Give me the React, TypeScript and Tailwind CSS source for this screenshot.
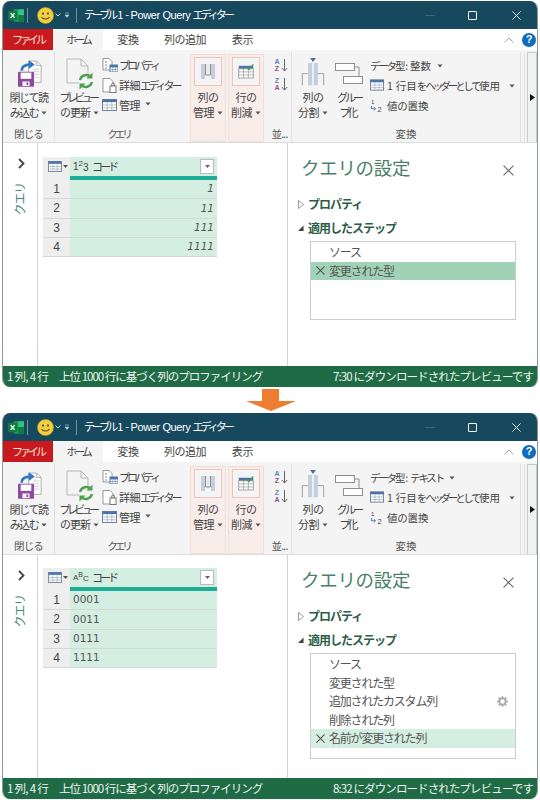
import React from "react";

const JP = { fontFamily: '"Noto Sans CJK JP", "Noto Sans", sans-serif' };
const LAT = { fontFamily: '"Liberation Sans", sans-serif' };

function K({ children }: { children: React.ReactNode }) {
  return <span className="tracking-[-3px]">{children}</span>;
}

function Caret() {
  return <svg width="6" height="4" viewBox="0 0 6 4" className="inline-block ml-[3px] mb-[2px]"><path d="M0.5 0.5h5L3 3.5z" fill="#555" /></svg>;
}

function ExcelLogo() {
  return (
    <svg width="16" height="15" viewBox="0 0 17 15">
      <rect x="6" y="1" width="11" height="13" fill="#21a366" />
      <rect x="11" y="1" width="6" height="6" fill="#33c481" />
      <rect x="11" y="7" width="6" height="7" fill="#107c41" />
      <rect x="0" y="2.5" width="10" height="10" rx="1" fill="#107c41" />
      <path d="M2.8 5l4.2 5M7 5l-4.2 5" stroke="#fff" strokeWidth="1.4" />
    </svg>
  );
}

function Smiley() {
  return (
    <svg width="17" height="17" viewBox="0 0 17 17">
      <circle cx="8.5" cy="8.5" r="8" fill="#f2cf3c" stroke="#c9a520" strokeWidth="0.6" />
      <circle cx="6" cy="6.5" r="1" fill="#333" />
      <circle cx="11" cy="6.5" r="1" fill="#333" />
      <path d="M4.5 10c1 2.6 7 2.6 8 0" fill="none" stroke="#333" strokeWidth="1" />
    </svg>
  );
}

function CloseLoadIcon() {
  return (
    <svg width="24" height="27" viewBox="0 0 27 30">
      <path d="M12 1h9l5 5v19H12z" fill="#fff" stroke="#a8a8a8" />
      <path d="M21 1v5h5" fill="none" stroke="#a8a8a8" />
      <path d="M17 10h7M17 13h7M17 16h7M17 19h7" stroke="#c9c9c9" />
      <path d="M4 12c0-5 4-7 10-7" fill="none" stroke="#2f78c4" strokeWidth="3" />
      <path d="M12 0l7 5-7 5z" fill="#2f78c4" />
      <rect x="0" y="13" width="18" height="17" rx="1" fill="#8f4aa0" />
      <rect x="3" y="14" width="12" height="7" fill="#fff" />
      <rect x="5" y="24" width="8" height="5" fill="#fff" />
      <rect x="9.5" y="25" width="2" height="3" fill="#8f4aa0" />
    </svg>
  );
}

function RefreshIcon() {
  return (
    <svg width="28" height="32" viewBox="0 0 28 32">
      <path d="M1 1h14l7 7v12M1 1v24h12" fill="none" stroke="#b5b5b5" />
      <path d="M15 1v7h7" fill="none" stroke="#b5b5b5" />
      <path d="M14 22a6.5 6.5 0 0 1 11-3" fill="none" stroke="#4da04f" strokeWidth="2.4" />
      <path d="M26.5 14.5v6h-6z" fill="#4da04f" />
      <path d="M26 24a6.5 6.5 0 0 1-11 3" fill="none" stroke="#4da04f" strokeWidth="2.4" />
      <path d="M13.5 31.5v-6h6z" fill="#4da04f" />
    </svg>
  );
}

function PropIcon() {
  return (
    <svg width="16" height="14" viewBox="0 0 16 14">
      <path d="M1 .5h6l3 3V12H1z" fill="#fff" stroke="#999" />
      <path d="M3 4h2M3 7h2M3 10h2" stroke="#888" />
      <rect x="8" y="7" width="8" height="7" fill="#fff" stroke="#5a7ba8" />
      <rect x="8" y="7" width="8" height="2.4" fill="#4a73a8" />
      <path d="M10.7 9v5M13.3 9v5M8 11.5h8" stroke="#7a94b8" strokeWidth=".7" />
    </svg>
  );
}

function EditorIcon() {
  return (
    <svg width="15" height="15" viewBox="0 0 15 15">
      <path d="M1 .5h7l3 3V14H1z" fill="#fff" stroke="#999" />
      <rect x="8" y="8" width="6" height="6.5" fill="#fff" stroke="#777" />
      <path d="M9.5 8V6.5a1.5 1.5 0 0 1 3 0V8" fill="none" stroke="#777" />
    </svg>
  );
}

function GridIcon({ w = 15, h = 12 }: { w?: number; h?: number }) {
  return (
    <svg width={w} height={h} viewBox="0 0 15 12">
      <rect x=".5" y=".5" width="14" height="11" fill="#fff" stroke="#6d7f99" />
      <rect x=".5" y=".5" width="14" height="2.6" fill="#4a73a8" />
      <path d="M5.2 3v8.5M9.8 3v8.5M.5 6h14M.5 8.8h14" stroke="#9aa8bd" strokeWidth=".7" />
    </svg>
  );
}

function ManageColsIcon() {
  return (
    <svg width="14" height="17" viewBox="0 0 14 17">
      <rect x="0" y="1" width="4" height="15" fill="#c6ced9" />
      <rect x="10" y="1" width="4" height="15" fill="#c6ced9" />
      <rect x="5" y="1" width="4" height="11" fill="#e7eaee" />
      <path d="M4.5 1v11h5V1" fill="none" stroke="#8f8f8f" />
    </svg>
  );
}

function RemoveRowsIcon() {
  return (
    <svg width="16" height="17" viewBox="0 0 21 21">
      <rect x="1" y="3" width="19" height="4" fill="#4a73a8" />
      <rect x="1" y="7" width="19" height="12" fill="#fff" stroke="#8a8a8a" />
      <path d="M7.3 7v12M13.6 7v12M1 11h19M1 15h19" stroke="#8a8a8a" strokeWidth=".8" />
      <path d="M11 4l3.5 4L20 1" fill="none" stroke="#3f9a52" strokeWidth="1.6" />
    </svg>
  );
}

function SplitIcon() {
  return (
    <svg width="28" height="28" viewBox="0 0 28 34">
      <path d="M1 33V19h7M27 33V19h-7" fill="none" stroke="#8f8f8f" />
      <path d="M8 6h5v27H8z" fill="#c3cfdc" />
      <path d="M15 6h5v27h-5z" fill="#c3cfdc" />
      <path d="M10.5 0h7L14 5z" fill="#466f9c" />
    </svg>
  );
}

function GroupIcon() {
  return (
    <svg width="28" height="21" viewBox="0 0 28 21">
      <rect x=".5" y=".5" width="19" height="7" fill="#fff" stroke="#8f8f8f" />
      <rect x="8.5" y="13.5" width="19" height="7" fill="#fff" stroke="#8f8f8f" />
      <path d="M19.5 4h4.5v9.5" fill="none" stroke="#8f8f8f" />
    </svg>
  );
}

function SortIcon({ top, bottom }: { top: string; bottom: string }) {
  return (
    <div className="flex items-center h-[17px]">
      <div className="flex flex-col w-[7px] text-[7px] leading-[7px] font-bold text-center" style={LAT}>
        <span className="text-[#5f82b8]">{top}</span>
        <span className="text-[#8a4f9c]">{bottom}</span>
      </div>
      <svg width="7" height="14" viewBox="0 0 7 14"><path d="M3.5 1v12M.8 10l2.7 3 2.7-3" fill="none" stroke="#555" strokeWidth=".9" /></svg>
    </div>
  );
}

function Replace() {
  return (
    <svg width="14" height="15" viewBox="0 0 15 15">
      <text x="1" y="6" fontSize="6.5" fill="#444" fontFamily="Liberation Sans">1</text>
      <path d="M1.5 8v3h4M4 9l2 2-2 2" fill="none" stroke="#3c78c4" strokeWidth="1" />
      <text x="8" y="14" fontSize="8" fill="#444" fontFamily="Liberation Sans">2</text>
    </svg>
  );
}

function Btn({ l1, l2, caret, tracking = "tracking-[-0.6px]" }: { l1: React.ReactNode; l2: React.ReactNode; caret?: boolean; tracking?: string }) {
  return (
    <div className={`text-[11px] leading-[15px] text-[#444] text-center whitespace-nowrap ${tracking}`}>
      <div>{l1}</div>
      <div>{l2}{caret && <Caret />}</div>
    </div>
  );
}

function Label({ children }: { children: React.ReactNode }) {
  return <div className="h-[19px] pt-[3px] text-[10.5px] leading-[15px] text-[#555] text-center whitespace-nowrap overflow-hidden">{children}</div>;
}

function Group({ width, label, children, sep = true }: { width: string; label: React.ReactNode; children: React.ReactNode; sep?: boolean }) {
  return (
    <div className={`${width} h-full flex flex-col shrink-0 ${sep ? "border-r border-[#e0e0e0]" : ""}`}>
      <div className="flex-1 flex min-h-0">{children}</div>
      <Label>{label}</Label>
    </div>
  );
}

function Pink({ icon, l1, l2 }: { icon: React.ReactNode; l1: string; l2: string }) {
  return (
    <div className="w-[36px] h-[88px] mt-[2px] shrink-0 bg-[#f9edea] border border-[#f2dcd7] flex flex-col items-center pt-[2px]">
      <div className="w-[28px] h-[29px] border border-[#efc4bb] bg-[#f5f4f4] flex items-center justify-center">{icon}</div>
      <div className="mt-[4px]"><Btn l1={l1} l2={l2} caret /></div>
    </div>
  );
}

function Ribbon({ dataType }: { dataType: React.ReactNode }) {
  return (
    <div className="h-[93px] bg-[#f5f4f4] border-b border-[#dddddd] flex items-stretch pt-[2px] shrink-0">
      <Group width="w-[52px]" label={<span className="tracking-[-0.8px]">閉じる</span>}>
        <div className="w-full flex flex-col items-center pt-[8px] gap-[3px]">
          <div className="ml-[2px]"><CloseLoadIcon /></div>
          <Btn l1="閉じて読" l2="み込む" caret tracking="tracking-[-1.5px]" />
        </div>
      </Group>
      <Group width="w-[131px]" label={<span className="pr-[4px]"><K>クエリ</K></span>} sep={false}>
        <div className="w-[45px] ml-[2px] flex flex-col items-center pt-[6px]">
          <RefreshIcon />
          <div className="text-[11px] leading-[15px] text-[#444] text-center whitespace-nowrap">
            <div className="tracking-[-3.6px] -ml-[3px]">プレビュー</div>
            <div className="tracking-[-1px]">の更新<Caret /></div>
          </div>
        </div>
        <div className="flex flex-col pt-[3px] text-[11px] text-[#444] whitespace-nowrap leading-[15px]">
          <div className="flex items-center gap-[1px] h-[20px]"><PropIcon /><K>プロパティ</K></div>
          <div className="flex items-center gap-[2px] h-[20px]"><EditorIcon /><span><span className="tracking-[-0.4px]">詳細</span><K>エディター</K></span></div>
          <div className="flex items-center gap-[2px] h-[20px]"><GridIcon /><span className="tracking-[-0.4px]">管理</span><Caret /></div>
        </div>
      </Group>
      <div className="w-[4px] shrink-0" />
      <Pink icon={<ManageColsIcon />} l1="列の" l2="管理" />
      <div className="w-[2px] shrink-0" />
      <Pink icon={<RemoveRowsIcon />} l1="行の" l2="削減" />
      <div className="w-[28px] h-full shrink-0 border-r border-[#e0e0e0] flex flex-col items-center">
        <div className="flex-1 pt-[4px] pl-[6px] flex flex-col gap-[2px]">
          <SortIcon top="A" bottom="Z" />
          <SortIcon top="Z" bottom="A" />
        </div>
        <div className="pl-[4px]"><Label><span className="tracking-[-0.8px]">並...</span></Label></div>
      </div>
      <Group width="w-[229px]" label="変換">
        <div className="w-[42px] flex flex-col items-center pt-[6px] gap-[4px]">
          <SplitIcon />
          <Btn l1="列の" l2="分割" caret />
        </div>
        <div className="w-[30px] flex flex-col items-center pt-[11px] gap-[6px]">
          <GroupIcon />
          <Btn l1={<K>グルー</K>} l2={<><K>プ</K><span>化</span></>} tracking="tracking-normal" />
        </div>
        <div className="flex flex-col pl-[6px] pt-[3px] text-[10.5px] text-[#444] whitespace-nowrap leading-[15px]">
          <div className="h-[20px] flex items-center">
            <span><span className="tracking-[-2.2px]">データ</span><span className="tracking-[-0.2px]">型: </span>{dataType}</span><span className="ml-[3px]"><Caret /></span>
          </div>
          <div className="h-[20px] flex items-center gap-[3px]">
            <GridIcon w={14} h={12} />
            <span><span className="mr-[3px]">1</span><span>行目</span><span className="tracking-[-2px]">を</span><K>ヘッダー</K><span className="tracking-[-2.5px]">として</span><span>使用</span></span>
            <span className="ml-[3px]"><Caret /></span>
          </div>
          <div className="h-[20px] flex items-center gap-[3px]"><Replace /><span className="tracking-[-0.2px]">値の置換</span></div>
        </div>
      </Group>
      <div className="w-[4px] shrink-0 border-r border-[#f2dcd7] h-full" />
      <div className="w-[2px] shrink-0" />
      <div className="w-[10px] shrink-0 border-x border-t border-[#b9d3c6] bg-[#f1f1f1] flex items-center justify-center h-full">
        <svg width="5" height="7" viewBox="0 0 5 7"><path d="M0 0l5 3.5L0 7z" fill="#111" /></svg>
      </div>
    </div>
  );
}

function DataTable({ kind, rows }: { kind: "num" | "text"; rows: string[] }) {
  return (
    <div className="w-[174px] bg-[#eeeeee] text-[#444]">
      <div className="flex h-[19px]">
        <div className="w-[27px] flex items-center pl-[5px] gap-[1px]">
          <GridIcon w={14} h={11} />
          <svg width="5" height="3" viewBox="0 0 5 3"><path d="M0 0h5L2.5 3z" fill="#555" /></svg>
        </div>
        <div className="flex-1 bg-[#d5eee2] flex items-center pl-[3px] pr-[3px]">
          {kind === "num" ? (
            <span className="w-[19px] flex items-center text-[10px] leading-none" style={LAT}>
              <span>1</span>
              <span className="text-[8px] -translate-y-[3px]">2</span>
              <span className="translate-y-[1px]">3</span>
            </span>
          ) : (
            <span className="w-[19px] flex items-center text-[8px] leading-none" style={LAT}>
              <span>A</span>
              <span className="text-[7px] -translate-y-[3px]">B</span>
              <span className="translate-y-[1px]">C</span>
            </span>
          )}
          <span className="text-[11px] flex-1"><K>コード</K></span>
          <div className="w-[14px] h-[15px] bg-white border border-[#bbbbbb] flex items-center justify-center">
            <svg width="5" height="3" viewBox="0 0 5 3"><path d="M0 0h5L2.5 3z" fill="#666" /></svg>
          </div>
        </div>
      </div>
      <div className="h-[4px] flex">
        <div className="w-[27px]" />
        <div className="flex-1 bg-[#1ead96]" />
      </div>
      {rows.map((r, i) => (
        <div key={i} className="flex h-[19.25px] border-b border-[#d2d8d4]">
          <div className="w-[27px] flex items-center justify-center text-[12px]" style={LAT}>{i + 1}</div>
          <div
            className={`flex-1 bg-[#d5eee2] flex items-center px-[3px] text-[10.5px] text-[#555] ${kind === "num" ? "justify-end italic" : ""}`}
            style={{ fontFamily: '"DejaVu Sans", sans-serif' }}
          >
            {r}
          </div>
        </div>
      ))}
    </div>
  );
}

function Triangle({ open }: { open: boolean }) {
  return open ? (
    <svg width="7" height="7" viewBox="0 0 7 7"><path d="M0 6.5h6.5V0z" fill="#444" /></svg>
  ) : (
    <svg width="6" height="9" viewBox="0 0 6 9"><path d="M.5.5l5 4-5 4z" fill="#fff" stroke="#999" /></svg>
  );
}

function XMark({ size = 9, color = "#666", w = 1 }: { size?: number; color?: string; w?: number }) {
  return <svg width={size} height={size} viewBox="0 0 10 10"><path d="M.5.5l9 9M9.5.5l-9 9" stroke={color} strokeWidth={w} fill="none" /></svg>;
}

function Gear() {
  return (
    <svg width="11" height="11" viewBox="0 0 11 11">
      <circle cx="5.5" cy="5.5" r="3.2" fill="none" stroke="#aaa" strokeWidth="2" />
      <path d="M5.5 0v2M5.5 9v2M0 5.5h2M9 5.5h2M1.6 1.6l1.4 1.4M8 8l1.4 1.4M1.6 9.4L3 8M8 3l1.4-1.4" stroke="#aaa" strokeWidth="1.4" />
    </svg>
  );
}

function Settings({ steps, active, listH, gear, activeBg }: { steps: string[]; active: number; listH: string; gear?: number; activeBg: string }) {
  return (
    <div className="flex-1 min-w-0 border-l border-[#d4d4d4]">
      <div className="flex items-center h-[42px] pl-[13px] pt-[6px]">
        <div className="text-[18.5px] tracking-[-0.3px] text-[#4c7f69] whitespace-nowrap flex-1 leading-[28px]">クエリの設定</div>
        <div className="mr-[23px] mt-[6px]"><XMark size={11} color="#666" /></div>
      </div>
      <div className="mt-[10px] flex items-center h-[18px] pl-[10px] gap-[4px]">
        <div className="w-[6px] flex justify-center"><Triangle open={false} /></div>
        <span className="text-[12px] font-bold text-[#2d5c47] tracking-[-1px] whitespace-nowrap">プロパティ</span>
      </div>
      <div className="mt-[6px] flex items-center h-[18px] pl-[10px] gap-[4px]">
        <div className="w-[6px] flex justify-center"><Triangle open /></div>
        <span className="text-[12px] font-bold text-[#2d5c47] tracking-[-1px] whitespace-nowrap">適用したステップ</span>
      </div>
      <div className={`ml-[22px] mr-[21px] mt-[4px] ${listH} border border-[#cccccc] bg-white pt-[1px]`}>
        {steps.map((s, i) => (
          <div key={i} className={`h-[18.5px] flex items-center text-[12px] text-[#555] whitespace-nowrap ${i === active ? activeBg : ""}`}>
            <div className="w-[18px] flex justify-center">{i === active && <XMark size={9} color="#555" w={1.2} />}</div>
            <span className="tracking-[-1.2px] flex-1">{s}</span>
            {gear === i && <div className="mr-[7px]"><Gear /></div>}
          </div>
        ))}
      </div>
    </div>
  );
}

function Win(p: {
  dataType: React.ReactNode; kind: "num" | "text"; rows: string[]; time: string; steps: string[]; active: number; listH: string; gear?: number; activeBg: string; tableGap: string;
}) {
  return (
    <div className="mx-[2px] h-[386px] flex flex-col rounded-[8px] overflow-hidden bg-white border-x border-[#8c9a96]" style={JP}>
      <div className="h-[28px] bg-[#17495e] flex items-center text-white shrink-0">
        <div className="ml-[5px]"><ExcelLogo /></div>
        <div className="ml-[3px] w-px h-[15px] bg-[#6f93a3]" />
        <div className="ml-[9px]"><Smiley /></div>
        <svg className="ml-[1px]" width="6" height="4" viewBox="0 0 6 4"><path d="M.5.5L3 3 5.5.5" fill="none" stroke="#cfdfe6" /></svg>
        <svg className="ml-[3px]" width="6" height="6" viewBox="0 0 6 6"><path d="M1 1h4M1 3h4L3 5.5z" fill="#b8ccd5" stroke="#b8ccd5" strokeWidth=".6" /></svg>
        <div className="ml-[6px] w-px h-[15px] bg-[#6f93a3]" />
        <div className="ml-[7px] text-[11px] tracking-[-0.4px] whitespace-nowrap flex-1">
          <K>テーブル</K><span className="ml-[2px]">1</span> - <span style={LAT}>Power Query</span> <K>エディター</K>
        </div>
        <div className="w-[10px] h-px bg-[#3c6577] mr-[33px]" />
        <div className="w-[9px] h-[9px] border border-white rounded-[1px] mr-[35px]" />
        <div className="mr-[16px]"><XMark size={9} color="#fff" /></div>
      </div>
      <div className="h-[21px] bg-white flex items-stretch text-[11px] text-[#444] shrink-0 whitespace-nowrap">
        <div className="w-[50px] bg-[#c8191e] text-[#fbe3d8] flex items-center justify-center"><K>ファイル</K></div>
        <div className="w-[50px] bg-[#f5f4f4] flex items-center justify-center"><K>ホーム</K></div>
        <div className="ml-[14px] w-[22px] flex items-center justify-center tracking-[-0.2px]">変換</div>
        <div className="ml-[25px] w-[42px] flex items-center justify-center tracking-[-0.5px]">列の追加</div>
        <div className="ml-[26px] w-[21px] flex items-center justify-center tracking-[-0.3px]">表示</div>
        <div className="flex-1" />
        <div className="flex items-center mr-[8px]">
          <svg width="10" height="6" viewBox="0 0 10 6"><path d="M.5 5.5L5 1l4.5 4.5" fill="none" stroke="#aaa" /></svg>
        </div>
        <div className="flex items-center mr-[1px]">
          <div className="w-[14px] h-[14px] rounded-full bg-[#0f6cbd] text-white text-[11px] font-bold flex items-center justify-center" style={LAT}>?</div>
        </div>
      </div>
      <Ribbon dataType={p.dataType} />
      <div className="flex-1 min-h-0 flex bg-white">
        <div className="w-[35px] border-r border-[#d4d4d4] flex flex-col items-center shrink-0 pt-[15px]">
          <svg className="ml-[2px]" width="7" height="11" viewBox="0 0 7 11"><path d="M1 1l4.5 4.5L1 10" fill="none" stroke="#444" strokeWidth="1.8" /></svg>
          <div className="mt-[14px] text-[12px] tracking-[-1.2px] text-[#3f8a70] rotate-180 whitespace-nowrap [writing-mode:vertical-rl] [text-orientation:sideways]">クエリ</div>
        </div>
        <div className={`w-[249px] shrink-0 pl-[5px] ${p.tableGap}`}>
          <DataTable kind={p.kind} rows={p.rows} />
        </div>
        <Settings steps={p.steps} active={p.active} listH={p.listH} gear={p.gear} activeBg={p.activeBg} />
      </div>
      <div className="h-[21px] bg-[#1f6b45] text-[#f0f6f2] flex items-center text-[11.5px] whitespace-nowrap shrink-0 px-[4px]">
        <span className="tracking-[-0.7px]">1 列, 4 行</span>
        <span className="ml-[11px] tracking-[-1px]">上位 1000 行に基づく列のプロファイリング</span>
        <span className="flex-1" />
        <span className="tracking-[-0.9px]">{p.time} にダウンロードされたプレビューです</span>
      </div>
    </div>
  );
}

export default function App() {
  return (
    <div className="w-[540px] h-[800px] bg-white overflow-hidden pt-[1px]">
      <Win
        dataType="整数"
        kind="num"
        rows={["1", "11", "111", "1111"]}
        time="7:30"
        steps={["ソース", "変更された型"]}
        active={1}
        listH="h-[79px]"
        activeBg="bg-[#a0d3b5]"
        tableGap="pt-[14px]"
      />
      <div className="h-[26px] flex justify-center items-center pl-[1px]">
        <svg width="50" height="22" viewBox="0 0 50 22"><path d="M16 0h17v12h17L25 22 0 12h16z" fill="#ed7d31" /></svg>
      </div>
      <Win
        dataType={<span className="tracking-[-2.2px]">テキスト</span>}
        kind="text"
        rows={["0001", "0011", "0111", "1111"]}
        time="8:32"
        steps={["ソース", "変更された型", "追加されたカスタム列", "削除された列", "名前が変更された列"]}
        active={4}
        listH="h-[106px]"
        gear={2}
        activeBg="bg-[#d5eee2]"
        tableGap="pt-[13px]"
      />
    </div>
  );
}
